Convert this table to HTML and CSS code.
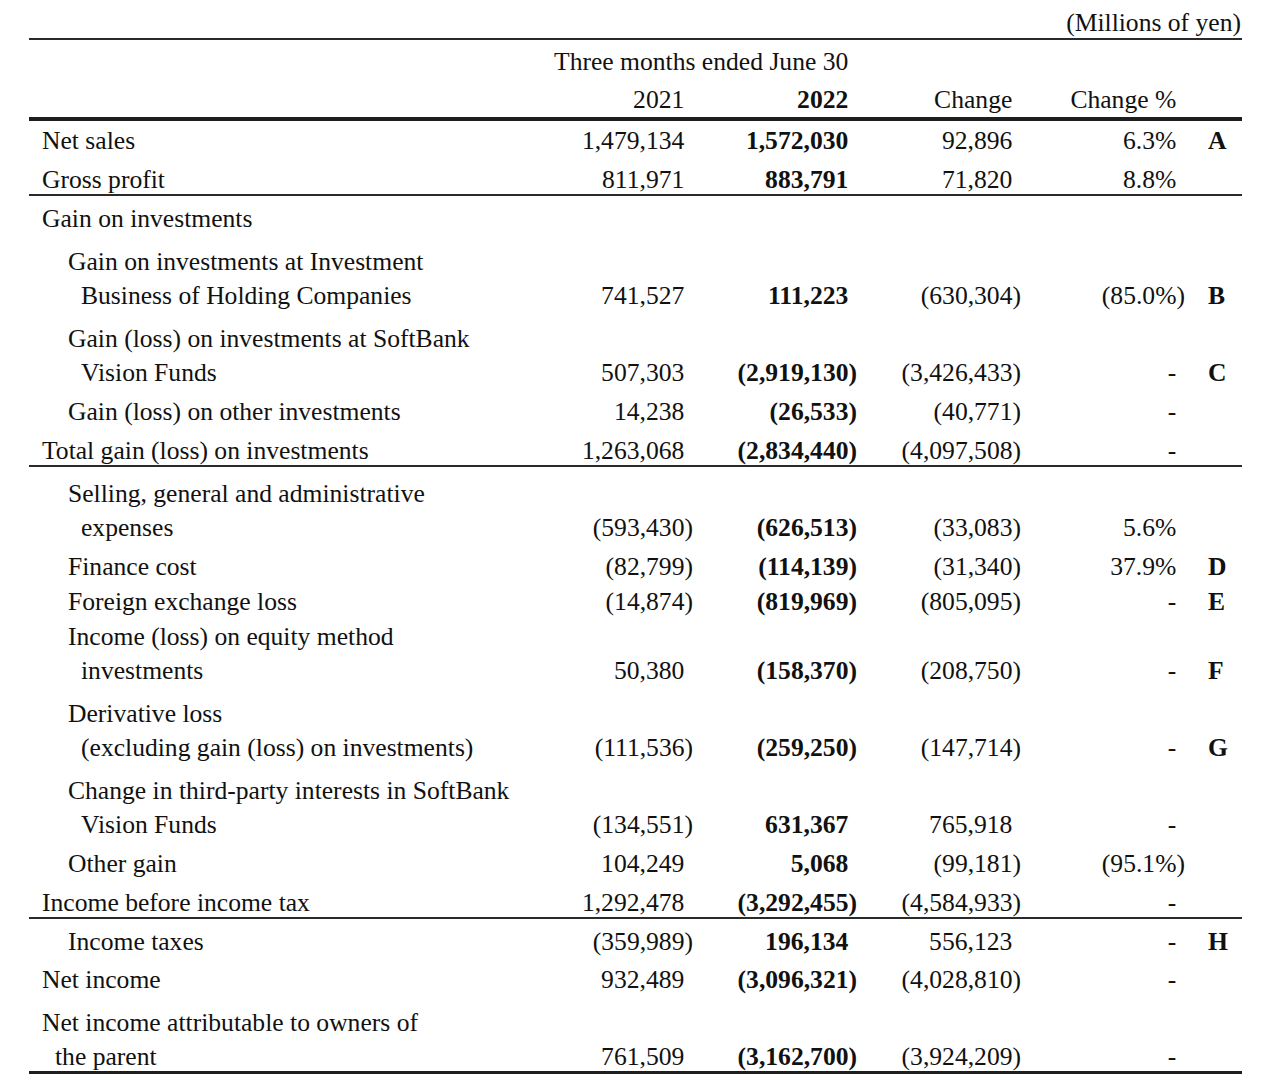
FILE: index.html
```html
<!DOCTYPE html>
<html lang="en">
<head>
<meta charset="utf-8">
<title>Consolidated results</title>
<link rel="stylesheet" href="styles.css">
</head>
<body>
<div class="sheet">
  <div class="unit">(Millions of yen)</div>
  <div class="head">
    <div class="row period">
      <div class="period-title">Three months ended June 30</div>
    </div>
    <div class="row years">
      <div class="label"></div>
      <div class="cell">2021</div>
      <div class="cell b">2022</div>
      <div class="cell">Change</div>
      <div class="cell">Change %</div>
      <div class="mark"></div>
    </div>
  </div>

  <div class="section">
    <div class="row first">
      <div class="label">Net sales</div>
      <div class="cell">1,479,134</div>
      <div class="cell b">1,572,030</div>
      <div class="cell">92,896</div>
      <div class="cell">6.3%</div>
      <div class="mark">A</div>
    </div>
    <div class="row">
      <div class="label">Gross profit</div>
      <div class="cell">811,971</div>
      <div class="cell b">883,791</div>
      <div class="cell">71,820</div>
      <div class="cell">8.8%</div>
      <div class="mark"></div>
    </div>
  </div>

  <div class="section">
    <div class="row after-rule">
      <div class="label">Gain on investments</div>
    </div>
    <div class="row group">
      <div class="label ind"><div>Gain on investments at Investment</div><div class="cont">Business of Holding Companies</div></div>
      <div class="cell">741,527</div>
      <div class="cell b">111,223</div>
      <div class="cell"><span class="neg">(630,304)</span></div>
      <div class="cell"><span class="neg">(85.0%)</span></div>
      <div class="mark">B</div>
    </div>
    <div class="row group">
      <div class="label ind"><div>Gain (loss) on investments at SoftBank</div><div class="cont">Vision Funds</div></div>
      <div class="cell">507,303</div>
      <div class="cell b"><span class="neg">(2,919,130)</span></div>
      <div class="cell"><span class="neg">(3,426,433)</span></div>
      <div class="cell">-</div>
      <div class="mark">C</div>
    </div>
    <div class="row">
      <div class="label ind">Gain (loss) on other investments</div>
      <div class="cell">14,238</div>
      <div class="cell b"><span class="neg">(26,533)</span></div>
      <div class="cell"><span class="neg">(40,771)</span></div>
      <div class="cell">-</div>
      <div class="mark"></div>
    </div>
    <div class="row">
      <div class="label">Total gain (loss) on investments</div>
      <div class="cell">1,263,068</div>
      <div class="cell b"><span class="neg">(2,834,440)</span></div>
      <div class="cell"><span class="neg">(4,097,508)</span></div>
      <div class="cell">-</div>
      <div class="mark"></div>
    </div>
  </div>

  <div class="section">
    <div class="row after-rule-wide">
      <div class="label ind"><div>Selling, general and administrative</div><div class="cont">expenses</div></div>
      <div class="cell"><span class="neg">(593,430)</span></div>
      <div class="cell b"><span class="neg">(626,513)</span></div>
      <div class="cell"><span class="neg">(33,083)</span></div>
      <div class="cell">5.6%</div>
      <div class="mark"></div>
    </div>
    <div class="row">
      <div class="label ind">Finance cost</div>
      <div class="cell"><span class="neg">(82,799)</span></div>
      <div class="cell b"><span class="neg">(114,139)</span></div>
      <div class="cell"><span class="neg">(31,340)</span></div>
      <div class="cell">37.9%</div>
      <div class="mark">D</div>
    </div>
    <div class="row tight">
      <div class="label ind">Foreign exchange loss</div>
      <div class="cell"><span class="neg">(14,874)</span></div>
      <div class="cell b"><span class="neg">(819,969)</span></div>
      <div class="cell"><span class="neg">(805,095)</span></div>
      <div class="cell">-</div>
      <div class="mark">E</div>
    </div>
    <div class="row tight">
      <div class="label ind"><div>Income (loss) on equity method</div><div class="cont">investments</div></div>
      <div class="cell">50,380</div>
      <div class="cell b"><span class="neg">(158,370)</span></div>
      <div class="cell"><span class="neg">(208,750)</span></div>
      <div class="cell">-</div>
      <div class="mark">F</div>
    </div>
    <div class="row group">
      <div class="label ind"><div>Derivative loss</div><div class="cont">(excluding gain (loss) on investments)</div></div>
      <div class="cell"><span class="neg">(111,536)</span></div>
      <div class="cell b"><span class="neg">(259,250)</span></div>
      <div class="cell"><span class="neg">(147,714)</span></div>
      <div class="cell">-</div>
      <div class="mark">G</div>
    </div>
    <div class="row group">
      <div class="label ind"><div>Change in third-party interests in SoftBank</div><div class="cont">Vision Funds</div></div>
      <div class="cell"><span class="neg">(134,551)</span></div>
      <div class="cell b">631,367</div>
      <div class="cell">765,918</div>
      <div class="cell">-</div>
      <div class="mark"></div>
    </div>
    <div class="row">
      <div class="label ind">Other gain</div>
      <div class="cell">104,249</div>
      <div class="cell b">5,068</div>
      <div class="cell"><span class="neg">(99,181)</span></div>
      <div class="cell"><span class="neg">(95.1%)</span></div>
      <div class="mark"></div>
    </div>
    <div class="row">
      <div class="label">Income before income tax</div>
      <div class="cell">1,292,478</div>
      <div class="cell b"><span class="neg">(3,292,455)</span></div>
      <div class="cell"><span class="neg">(4,584,933)</span></div>
      <div class="cell">-</div>
      <div class="mark"></div>
    </div>
  </div>

  <div class="section last">
    <div class="row after-rule">
      <div class="label ind">Income taxes</div>
      <div class="cell"><span class="neg">(359,989)</span></div>
      <div class="cell b">196,134</div>
      <div class="cell">556,123</div>
      <div class="cell">-</div>
      <div class="mark">H</div>
    </div>
    <div class="row near">
      <div class="label">Net income</div>
      <div class="cell">932,489</div>
      <div class="cell b"><span class="neg">(3,096,321)</span></div>
      <div class="cell"><span class="neg">(4,028,810)</span></div>
      <div class="cell">-</div>
      <div class="mark"></div>
    </div>
    <div class="row group">
      <div class="label"><div>Net income attributable to owners of</div><div class="cont">the parent</div></div>
      <div class="cell">761,509</div>
      <div class="cell b"><span class="neg">(3,162,700)</span></div>
      <div class="cell"><span class="neg">(3,924,209)</span></div>
      <div class="cell">-</div>
      <div class="mark"></div>
    </div>
  </div>
</div>
</body>
</html>
```

FILE: styles.css
```css
html, body {
  margin: 0;
  padding: 0;
  background: #ffffff;
}

body {
  font-family: "Liberation Serif", "Times New Roman", serif;
  font-size: 25.6px;
  color: #111111;
}

.sheet {
  width: 1213px;
  margin-left: 29px;
  padding-top: 9px;
}

.unit {
  line-height: 28px;
  text-align: right;
  padding-right: 1px;
}

.head {
  margin-top: 1px;
  border-top: 2px solid #2a2a2a;
  border-bottom: 4px solid #1e1e1e;
  padding-bottom: 3px;
}

.row {
  display: grid;
  grid-template-columns: 500px 164px 164px 164px 164px 57px;
  align-items: end;
  line-height: 28px;
  margin-top: 11px;
  white-space: nowrap;
}

.row.first { margin-top: 6px; }
.row.tight { margin-top: 7px; }
.row.group { margin-top: 15px; }
.row.after-rule { margin-top: 9px; }
.row.after-rule-wide { margin-top: 13px; }
.row.near { margin-top: 10px; }

.row.period { margin-top: 8px; }
.row.years { margin-top: 10px; }

.period-title {
  grid-column: 2 / 4;
  text-align: right;
  padding-right: 0.34em;
}

.label {
  padding-left: 13px;
}

.label.ind {
  padding-left: 39px;
}

.label .cont {
  margin-top: 6px;
  padding-left: 13px;
}

.cell {
  text-align: right;
  padding-right: 0.34em;
}

.cell.b {
  font-weight: bold;
}

.neg {
  margin-right: -0.34em;
}

.mark {
  font-weight: bold;
  padding-left: 23px;
}

.section {
  border-bottom: 2px solid #2a2a2a;
}

.section.last {
  border-bottom: 4px solid #1e1e1e;
}
```
